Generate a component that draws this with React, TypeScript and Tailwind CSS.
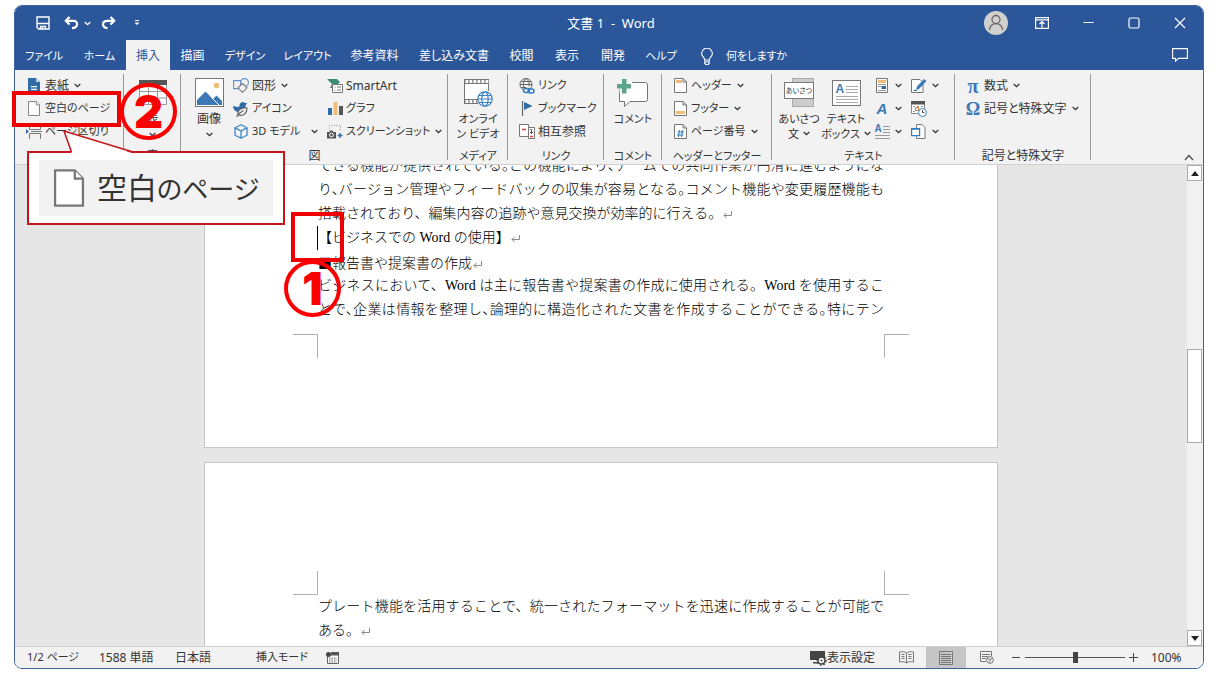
import { useState } from "react";
import type { ReactNode } from "react";
import clsx from "clsx";

const TABS = [
  { label: "ファイル", width: "w-[58px]" },
  { label: "ホーム", width: "w-[53px]" },
  { label: "挿入", width: "w-[44px]" },
  { label: "描画", width: "w-[45px]" },
  { label: "デザイン", width: "w-[60px]" },
  { label: "レイアウト", width: "w-[65px]" },
  { label: "参考資料", width: "w-[69px]" },
  { label: "差し込み文書", width: "w-[90px]" },
  { label: "校閲", width: "w-[45px]" },
  { label: "表示", width: "w-[46px]" },
  { label: "開発", width: "w-[46px]" },
  { label: "ヘルプ", width: "w-[50px]" },
];

// Labels that are mostly kana are set one size smaller than kanji ones
const labelSize = (label: string) =>
  /[ぁ-ヶー]{3,}/.test(label) ? "text-[11px]" : "text-xs";

export default function App() {
  return (
    <div className="relative h-screen overflow-hidden bg-white px-[14px] py-[5px] font-['Noto_Sans','Noto_Sans_CJK_JP',sans-serif] text-xs text-[#333] [font-feature-settings:'palt']">
      <div className="flex h-full flex-col overflow-hidden rounded-lg border border-[#3f659f] bg-[#f2f2f2]">
        <TitleBar />
        <TabBar />
        <Ribbon />
        <div className="flex min-h-0 flex-1 bg-[#e6e6e6]">
          <Document />
          <ScrollBar />
        </div>
        <StatusBar />
      </div>
      <Annotations />
    </div>
  );
}

function TitleBar() {
  return (
    <header className="flex h-[34px] shrink-0 items-center bg-[#2b579a] text-white">
      <div className="flex flex-1 items-center pl-[21px]">
        <button aria-label="上書き保存">
          <svg width="14" height="14" viewBox="0 0 14 14" fill="none" stroke="#fff" strokeWidth="1.4">
            <path d="M1 1h12v12H2.500L1 11.500z" />
            <path d="M1 7.500h12M4.500 13v-2.500h5V13M6.500 13v-1.500" />
          </svg>
        </button>
        <button aria-label="元に戻す" className="ml-[14px]">
          <svg width="15" height="14" viewBox="0 0 15 14" fill="none" stroke="#fff" strokeWidth="2.200">
            <path d="M5.500 1 1.800 4.800l3.700 3.700M2 4.800h7.500c5 0 5 7-1.500 7.400" />
          </svg>
        </button>
        <button aria-label="元に戻す一覧" className="ml-[5px]">
          <Chevron className="text-white" />
        </button>
        <button aria-label="やり直し" className="ml-[10px]">
          <svg width="15" height="14" viewBox="0 0 15 14" fill="none" stroke="#fff" strokeWidth="2.200">
            <path d="m9.500 1 3.700 3.800-3.700 3.700M13 4.800H6.500c-6 0-6 7 0 7.400" />
          </svg>
        </button>
        <button aria-label="クイック アクセス ツール バーのカスタマイズ" className="ml-[18px]">
          <svg width="6" height="6" viewBox="0 0 6 6" fill="#fff">
            <path d="M1 0h4v1H1zM0.500 2.500h5L3 5z" />
          </svg>
        </button>
      </div>
      <h1 className="whitespace-pre pt-0.5 text-[13px]">文書 1  -  Word</h1>
      <div className="flex flex-1 items-center justify-end pr-[17px]">
        <button aria-label="アカウント">
          <svg width="24" height="24" viewBox="0 0 24 24" fill="none">
            <circle cx="12" cy="12" r="12" fill="#d2d0ce" />
            <circle cx="12" cy="8.500" r="4" stroke="#666" strokeWidth="1.300" />
            <path d="M5.500 19c0-8.500 13-8.500 13 0" stroke="#666" strokeWidth="1.300" />
          </svg>
        </button>
        <button aria-label="リボンの表示オプション" className="ml-[27px]">
          <svg width="14" height="12" viewBox="0 0 14 12" fill="none" stroke="#fff" strokeWidth="1.200">
            <path d="M.6.6h12.800v10.800H.6zM.6 2.800h12.800M7 10.500V5M4.500 7 7 4.500 9.500 7" />
          </svg>
        </button>
        <button aria-label="最小化" className="ml-[34px]">
          <svg width="11" height="12" viewBox="0 0 11 12">
            <path d="M.5 5.500h10" stroke="#fff" />
          </svg>
        </button>
        <button aria-label="最大化" className="ml-[34px]">
          <svg width="12" height="12" viewBox="0 0 12 12" fill="none" stroke="#fff" strokeWidth="1.200">
            <rect x="1" y="1" width="10" height="10" rx="1.500" />
          </svg>
        </button>
        <button aria-label="閉じる" className="ml-[34px]">
          <svg width="12" height="12" viewBox="0 0 12 12" fill="none" stroke="#fff" strokeWidth="1.200">
            <path d="m1 1 10 10M11 1 1 11" />
          </svg>
        </button>
      </div>
    </header>
  );
}

function TabBar() {
  const [active, setActive] = useState("挿入");

  return (
    <nav className="flex h-[30px] shrink-0 items-stretch bg-[#2b579a] text-white">
      {TABS.map((tab) => (
        <button
          key={tab.label}
          onClick={() => setActive(tab.label)}
          className={clsx(
            "shrink-0 whitespace-nowrap pt-0.5 text-center",
            tab.width,
            labelSize(tab.label),
            tab.label === active && "bg-[#f2f2f2] text-[#2b579a]",
          )}
        >
          {tab.label}
        </button>
      ))}
      <button className="ml-[15px] flex items-center gap-[13px] pt-0.5 text-[11px]">
        <svg width="12" height="17" viewBox="0 0 12 17" fill="none" stroke="#fff" strokeWidth="1.100">
          <path d="M3.800 12c0-2.500-3.200-3.300-3.200-6.400a5.400 5.400 0 0 1 10.800 0c0 3.100-3.200 3.900-3.200 6.400zM3.800 12v3.500l1 1h2.400l1-1V12M3.800 14h4.400" />
        </svg>
        何をしますか
      </button>
      <button aria-label="コメント" className="ml-auto mr-[15px]">
        <svg width="16" height="14" viewBox="0 0 16 14" fill="none" stroke="#fff" strokeWidth="1.100">
          <path d="M.6.6h14.800v9.800H6.500l-3 2.800v-2.800H.6z" />
        </svg>
      </button>
    </nav>
  );
}

function Chevron({ className }: { className?: string }) {
  return (
    <svg
      width="7"
      height="5"
      viewBox="0 0 7 5"
      fill="none"
      stroke="currentColor"
      strokeWidth="1.300"
      className={clsx("shrink-0", className)}
    >
      <path d="m.7 1 2.800 2.700L6.300 1" />
    </svg>
  );
}

function Group({
  label,
  className,
  children,
}: {
  label: string;
  className: string;
  children: ReactNode;
}) {
  return (
    <section className={clsx("relative flex shrink-0 flex-col", className)}>
      <div className="flex h-[73px]">{children}</div>
      <div
        className={clsx(
          "h-[17px] whitespace-nowrap text-center leading-[17px]",
          labelSize(label),
        )}
      >
        {label}
      </div>
      <div className="absolute right-0 top-0 h-[86px] w-px bg-[#999]" />
    </section>
  );
}

function SmallButton({
  icon,
  label,
  menu,
  className,
}: {
  icon: ReactNode;
  label: string;
  menu?: boolean;
  className?: string;
}) {
  return (
    <button
      className={clsx("flex h-[23px] items-center gap-[3px] whitespace-nowrap", className)}
    >
      <span className="flex w-4 shrink-0 justify-center">{icon}</span>
      <span className={labelSize(label)}>{label}</span>
      {menu && <Chevron className="ml-[2px]" />}
    </button>
  );
}

function BigButton({
  icon,
  children,
  className,
}: {
  icon: ReactNode;
  children: ReactNode;
  className: string;
}) {
  return (
    <button
      className={clsx(
        "flex shrink-0 flex-col items-center whitespace-nowrap leading-[15px]",
        className,
      )}
    >
      <span className="flex h-[37px] items-center">{icon}</span>
      {children}
    </button>
  );
}

function IconMenuButton({ icon, label, menu = true }: { icon: ReactNode; label: string; menu?: boolean }) {
  return (
    <button aria-label={label} className="flex h-[23px] items-center gap-[5px]">
      <span className="flex w-4 justify-center">{icon}</span>
      {menu && <Chevron />}
    </button>
  );
}

function Ribbon() {
  return (
    <div className="flex h-[95px] shrink-0 border-b border-[#d0d0d0] bg-[#f2f2f2] pt-1">
      <Group label="ページ" className="w-[109px]">
        <div className="pl-[11px]">
          <SmallButton icon={<CoverIcon />} label="表紙" menu />
          <SmallButton icon={<PageIcon width={12} height={15} />} label="空白のページ" />
          <SmallButton icon={<BreakIcon />} label="ページ区切り" />
        </div>
      </Group>
      <Group label="表" className="w-[57px]">
        <BigButton icon={<TableIcon />} className="w-full">
          <span>表</span>
          <Chevron className="mt-[6px]" />
        </BigButton>
      </Group>
      <Group label="図" className="w-[267px]">
        <BigButton icon={<PictureIcon />} className="ml-2 w-10">
          <span>画像</span>
          <Chevron className="mt-[6px]" />
        </BigButton>
        <div className="ml-1 w-[94px]">
          <SmallButton icon={<ShapesIcon />} label="図形" menu />
          <SmallButton icon={<BirdIcon />} label="アイコン" />
          <div className="flex items-center justify-between pr-[9px]">
            <SmallButton icon={<CubeIcon />} label="3D モデル" />
            <Chevron />
          </div>
        </div>
        <div>
          <SmallButton icon={<SmartArtIcon />} label="SmartArt" />
          <SmallButton icon={<ChartIcon />} label="グラフ" />
          <SmallButton icon={<ScreenshotIcon />} label="スクリーンショット" menu />
        </div>
      </Group>
      <Group label="メディア" className="w-[60px]">
        <BigButton icon={<VideoIcon />} className="w-full text-[11px]">
          <span>オンライ</span>
          <span>ン ビデオ</span>
        </BigButton>
      </Group>
      <Group label="リンク" className="w-24">
        <div className="pl-[11px]">
          <SmallButton icon={<LinkIcon />} label="リンク" />
          <SmallButton icon={<FlagIcon />} label="ブックマーク" />
          <SmallButton icon={<CrossRefIcon />} label="相互参照" />
        </div>
      </Group>
      <Group label="コメント" className="w-[58px]">
        <BigButton icon={<CommentIcon />} className="w-full text-[11px]">
          <span>コメント</span>
        </BigButton>
      </Group>
      <Group label="ヘッダーとフッター" className="w-[110px]">
        <div className="pl-[10px]">
          <SmallButton icon={<HeaderIcon />} label="ヘッダー" menu />
          <SmallButton icon={<FooterIcon />} label="フッター" menu />
          <SmallButton icon={<PageNumberIcon />} label="ページ番号" menu />
        </div>
      </Group>
      <Group label="テキスト" className="w-[183px]">
        <BigButton icon={<GreetingIcon />} className="ml-1 w-[46px] text-[11px]">
          <span>あいさつ</span>
          <span className="flex items-center gap-1">
            文 <Chevron />
          </span>
        </BigButton>
        <BigButton icon={<TextBoxIcon />} className="w-[48px] text-[11px]">
          <span>テキスト</span>
          <span className="flex items-center gap-1">
            ボックス <Chevron />
          </span>
        </BigButton>
        <div className="ml-1">
          <IconMenuButton label="クイック パーツ" icon={<QuickPartsIcon />} />
          <IconMenuButton label="ワードアート" icon={<WordArtIcon />} />
          <IconMenuButton label="ドロップ キャップ" icon={<DropCapIcon />} />
        </div>
        <div className="ml-[9px]">
          <IconMenuButton label="署名欄" icon={<SignatureIcon />} />
          <IconMenuButton label="日付と時刻" icon={<DateIcon />} menu={false} />
          <IconMenuButton label="オブジェクト" icon={<ObjectIcon />} />
        </div>
      </Group>
      <Group label="記号と特殊文字" className="w-[136px]">
        <div className="pl-[10px]">
          <SmallButton
            icon={<span className="font-['Liberation_Serif',serif] text-xl font-bold leading-none text-[#3b78b5]">π</span>}
            label="数式"
            menu
          />
          <SmallButton
            icon={<span className="font-['Liberation_Serif',serif] text-lg font-bold leading-none text-[#3b78b5]">Ω</span>}
            label="記号と特殊文字"
            menu
          />
        </div>
      </Group>
      <div className="flex flex-1 items-end justify-end pb-[3px] pr-[9px]">
        <button aria-label="リボンを折りたたむ">
          <svg width="10" height="7" viewBox="0 0 10 7" fill="none" stroke="#444" strokeWidth="1.200">
            <path d="m1 6 4-4.500L9 6" />
          </svg>
        </button>
      </div>
    </div>
  );
}

function CoverIcon() {
  return (
    <svg width="12" height="15" viewBox="0 0 12 15">
      <path d="M0 0h8l4 4v11H0z" fill="#2f6ca8" />
      <path d="M8 0v4h4z" fill="#b8d0e8" />
      <path d="M3 8h6v1.200H3zM3 10.800h6V12H3z" fill="#fff" />
    </svg>
  );
}

function PageIcon({ width, height }: { width: number; height: number }) {
  return (
    <svg width={width} height={height} viewBox="0 0 12 15" fill="#fff" stroke="#777" strokeWidth=".9">
      <path d="M.5.5h7.800l3.200 3.300v10.700H.5z" />
      <path d="M8.300.5v3.300h3.200" />
    </svg>
  );
}

function BreakIcon() {
  return (
    <svg width="16" height="14" viewBox="0 0 16 14" fill="none" stroke="#777">
      <path d="M3.500 0v4.500h11V0M3.500 14V8.500h11V14M5 6.500h11" />
      <path d="M0 4v5l3-2.500z" fill="#2f6ca8" stroke="none" />
    </svg>
  );
}

function TableIcon() {
  return (
    <svg width="28" height="25" viewBox="0 0 28 25" fill="#fff" stroke="#999">
      <path d="M.5.5h27v24H.5zM.5 11.500h27M.5 18h27M9.500 5v19.500M18.500 5v19.500" />
      <path d="M0 0h28v5H0z" fill="#555" stroke="none" />
    </svg>
  );
}

function PictureIcon() {
  return (
    <svg width="29" height="29" viewBox="0 0 29 29">
      <rect x=".5" y=".5" width="28" height="28" fill="#fff" stroke="#777" />
      <circle cx="21.500" cy="7.500" r="2.800" fill="#efbd77" />
      <path d="M2 27v-5l8.500-8.500L18 21l3.500-3.500L27 23v4z" fill="#3b78b5" />
      <path d="m15.500 18.500 8.500 8.500" stroke="#fff" />
    </svg>
  );
}

function ShapesIcon() {
  return (
    <svg width="16" height="15" viewBox="0 0 16 15" fill="#f2f2f2" stroke="#5d93c9" strokeWidth="1.100">
      <circle cx="11.500" cy="4.500" r="3.900" />
      <path d="M.6 2.600h7v8h-7z" />
      <path d="m9.500 5.500 4.500 4.300-4.500 4.500L5 9.800z" stroke="#777" />
    </svg>
  );
}

function BirdIcon() {
  return (
    <svg width="16" height="16" viewBox="0 0 16 16">
      <path d="M0 4.500c2 1.500 4.500 1.800 6.500 1C6 1.500 10 0 12 2l2.500.5-2 1.500c.5 2-.5 4-2 5.500L5 11C2 10.500 0 8 0 4.500z" fill="#2f6ca8" />
      <path d="M5 14c-1-5 3-7.500 9-7 0 5.500-3 8.500-9 7zM3.500 15.800c2-3 4-4.800 7-6.300" fill="#f2f2f2" stroke="#666" strokeWidth="1.200" />
    </svg>
  );
}

function CubeIcon() {
  return (
    <svg width="14" height="15" viewBox="0 0 14 15" fill="none" stroke="#2f7cc0" strokeWidth="1.200">
      <path d="m7 .8 6 3v7.400l-6 3-6-3V3.800zM1 3.800l6 3.200 6-3.200M7 7v7" />
    </svg>
  );
}

function SmartArtIcon() {
  return (
    <svg width="16" height="14" viewBox="0 0 16 14">
      <path d="M0 0h10l3 3-2 2H8v4H3l2-4z" fill="#3f8c74" />
      <path d="M5.500 5.500h10v8h-10z" fill="#fff" stroke="#777" />
      <path d="M7.500 8h1M10 8h4M7.500 11h1M10 11h4" stroke="#777" />
    </svg>
  );
}

function ChartIcon() {
  return (
    <svg width="15" height="13" viewBox="0 0 15 13">
      <path d="M0 6h4v7H0z" fill="#2f6ca8" />
      <path d="M5.500 0h4v13h-4z" fill="#efbd77" />
      <path d="M11 4h4v9h-4z" fill="#555" />
    </svg>
  );
}

function ScreenshotIcon() {
  return (
    <svg width="16" height="14" viewBox="0 0 16 14">
      <path d="M2.500 6V.5h11v6" fill="none" stroke="#999" strokeDasharray="1 1.500" />
      <path d="M0 7h2.500l1-1.500h2l1 1.500H9v6.500H0z" fill="#555" />
      <circle cx="4.500" cy="10" r="1.900" fill="#555" stroke="#fff" />
      <path d="M13 8v5M10.500 10.500h5" stroke="#2f6ca8" strokeWidth="1.500" />
    </svg>
  );
}

function VideoIcon() {
  return (
    <svg width="30" height="30" viewBox="0 0 30 30">
      <path d="M1.500 1.500h24v24h-24z" fill="#fff" />
      <path d="M1 1h25v5H1zM1 21h14v5H1z" fill="#777" />
      <path d="M2.500 3.500h23M2.500 23.500H15" stroke="#fff" strokeWidth="2.800" strokeDasharray="2.800 1.200" />
      <path d="M1.500 6v15M25.500 6v7" stroke="#777" />
      <g fill="#fff" stroke="#3b82c4" strokeWidth="1.200">
        <circle cx="22" cy="21" r="7.200" />
        <ellipse cx="22" cy="21" rx="3.200" ry="7.200" />
        <path d="M15 21h14M16 17.500h12M16 24.500h12" fill="none" />
      </g>
    </svg>
  );
}

function LinkIcon() {
  return (
    <svg width="16" height="16" viewBox="0 0 16 16" fill="none" stroke="#666">
      <circle cx="7" cy="6.500" r="6" />
      <path d="M1 6.500h12M2 3.500h10M2 9.500h5M7 .5c-3.500 3-3.500 8 0 12M7 .5c3 2 3.500 5 3 8" />
      <g stroke="#2f7cc0" strokeWidth="1.500">
        <rect x="4.500" y="10.500" width="6" height="4" rx="2" fill="#f2f2f2" />
        <rect x="9" y="11" width="6" height="4" rx="2" />
      </g>
    </svg>
  );
}

function FlagIcon() {
  return (
    <svg width="12" height="15" viewBox="0 0 12 15">
      <path d="M1.500 0v15" stroke="#666" strokeWidth="1.200" />
      <path d="m3 1 8.500 4L3 9z" fill="#2f6ca8" />
    </svg>
  );
}

function CrossRefIcon() {
  return (
    <svg width="16" height="15" viewBox="0 0 16 15" fill="#fff" stroke="#777">
      <path d="M.5.5h9v12h-9z" />
      <path d="M9.500 3.500h6v11h-6z" />
      <path d="M3 5.500h4M11 12.500h3" stroke="#d64b3c" strokeWidth="1.400" />
      <path d="M11 5.500h1.500v4M11 8l1.500 1.500L14 8" fill="none" stroke="#555" />
    </svg>
  );
}

function CommentIcon() {
  return (
    <svg width="32" height="28" viewBox="0 0 32 28">
      <path d="M2.500 10V22.500H7.500V27.500L13 22.500H28.500Q30.500 22.500 30.500 20.500V6Q30.500 3.500 28.500 3.500H15" fill="#fff" stroke="#777" />
      <path d="M2.500 14V4h12" fill="#f2f2f2" stroke="none" />
      <path d="M5 0h4.500v5H14v4.500H9.500v5H5v-5H0V5h5z" fill="#5ba58e" />
    </svg>
  );
}

function HeaderIcon() {
  return (
    <svg width="13" height="15" viewBox="0 0 13 15" fill="#fff" stroke="#777">
      <path d="M.5.5h8.500L12.500 4v10.500H.5zM9 .5V4h3.500" />
      <path d="M2 2h6v3H2z" fill="#efbd77" stroke="none" />
    </svg>
  );
}

function FooterIcon() {
  return (
    <svg width="13" height="15" viewBox="0 0 13 15" fill="#fff" stroke="#777">
      <path d="M.5.5h8.500L12.500 4v10.500H.5zM9 .5V4h3.500" />
      <path d="M2 10h9v3H2z" fill="#efbd77" stroke="none" />
    </svg>
  );
}

function PageNumberIcon() {
  return (
    <svg width="13" height="15" viewBox="0 0 13 15" fill="#fff" stroke="#777">
      <path d="M.5.5h8.500L12.500 4v10.500H.5zM9 .5V4h3.500" />
      <path d="M5.500 6 4.500 13M8.500 6l-1 7M3.500 8h6.500M3 11h6.500" stroke="#2f7cc0" />
    </svg>
  );
}

function GreetingIcon() {
  return (
    <span className="relative block h-[29px] w-[30px]">
      <span className="absolute inset-y-0 left-2 right-0 border border-[#aaa] bg-[#ccc]" />
      <span className="absolute inset-x-0 top-1 flex h-[17px] items-center justify-center border border-[#777] bg-white text-[7px]">
        あいさつ
      </span>
    </span>
  );
}

function TextBoxIcon() {
  return (
    <span className="relative block h-[26px] w-[29px] border border-[#777] bg-white">
      <svg width="27" height="24" viewBox="0 0 27 24" stroke="#aaa">
        <path d="M13 5.500h12M13 8.500h12M13 11.500h12M3 15.500h22M3 18.500h22M3 21.500h22" />
      </svg>
      <span className="absolute left-[3px] top-px font-['Liberation_Sans',sans-serif] text-xs font-bold leading-[15px] text-[#3b78b5]">
        A
      </span>
    </span>
  );
}

function QuickPartsIcon() {
  return (
    <svg width="12" height="15" viewBox="0 0 12 15" fill="#fff" stroke="#777">
      <path d="M.5.5h11v14H.5z" />
      <path d="M2 2h8v3H2z" fill="#efbd77" stroke="none" />
      <path d="M2 6.500h8M2 8.500h3M2 12.500h8" stroke="#999" />
      <path d="M5.500 8H10v3H5.500z" fill="#2f6ca8" stroke="none" />
    </svg>
  );
}

function WordArtIcon() {
  return (
    <span className="font-['Liberation_Sans',sans-serif] text-[15px] font-bold italic leading-none text-[#3b78b5]">
      A
    </span>
  );
}

function DropCapIcon() {
  return (
    <span className="relative block h-[14px] w-[15px]">
      <svg width="15" height="14" viewBox="0 0 15 14" stroke="#999">
        <path d="M8 1.500h7M8 4.500h7M8 7.500h7M0 10.500h15M0 13.500h15" />
      </svg>
      <span className="absolute left-0 top-0 font-['Liberation_Sans',sans-serif] text-[10px] font-bold leading-[8px] text-[#3b78b5]">
        A
      </span>
    </span>
  );
}

function SignatureIcon() {
  return (
    <svg width="16" height="15" viewBox="0 0 16 15">
      <path d="M.5 1.500H9l3 3v10H.5z" fill="#fff" stroke="#777" />
      <path d="m5 12 1-3.500L13 1l2.500 2L8 11z" fill="#3b78b5" />
      <path d="M2.500 12.500H6" stroke="#2f6ca8" />
    </svg>
  );
}

function DateIcon() {
  return (
    <svg width="16" height="16" viewBox="0 0 16 16">
      <path d="M.5.5h13v12H.5z" fill="#fff" stroke="#888" />
      <path d="M0 0h14v3.500H0z" fill="#555" />
      <path d="M2 5.500h2M6 5.500h2M10 5.500h2M2 10.500h2" stroke="#999" />
      <path d="M4.500 6.500h3v3h-3z" fill="#fff" stroke="#e07b39" />
      <circle cx="11.500" cy="11.500" r="4" fill="#fff" stroke="#3b82c4" />
      <path d="M11.500 9v2.500h2" stroke="#555" fill="none" />
    </svg>
  );
}

function ObjectIcon() {
  return (
    <svg width="16" height="15" viewBox="0 0 16 15" fill="#fff">
      <path d="M5.500.5h5.500l3 3v11H5.500z" stroke="#777" />
      <path d="M.6 4.600h8v7h-8z" stroke="#2f7cc0" strokeWidth="1.200" />
      <path d="M0 4h9v1.800H0z" fill="#2f7cc0" />
    </svg>
  );
}

function ReturnMark() {
  return (
    <svg width="9" height="8" viewBox="0 0 9 8" fill="none" stroke="#888" className="ml-px inline-block">
      <path d="M8.500 0v4.500H1M3.500 2 1 4.500 3.500 7" />
    </svg>
  );
}

function Line({
  children,
  full,
  tight,
}: {
  children: ReactNode;
  full?: boolean;
  tight?: boolean;
}) {
  return (
    <p
      className={clsx(
        "h-6 whitespace-nowrap",
        full && "[text-align-last:justify]",
        tight && "[font-feature-settings:'halt']",
      )}
    >
      {children}
    </p>
  );
}

function CropMarks({ side }: { side: "top" | "bottom" }) {
  const edge = side === "bottom" ? "border-t" : "border-b";

  return (
    <div className="-mx-[25px] flex justify-between">
      <span className={clsx("h-6 w-[25px] border-r border-[#b0b0b0]", edge)} />
      <span className={clsx("h-6 w-[25px] border-l border-[#b0b0b0]", edge)} />
    </div>
  );
}

function Document() {
  return (
    <main className="flex min-w-0 flex-1 flex-col items-center overflow-hidden font-['Liberation_Serif','Noto_Sans_CJK_JP',serif] text-sm font-light leading-6 text-black [font-feature-settings:normal]">
      <article className="-mt-3 w-[794px] shrink-0 border border-[#c6c6c6] bg-white px-[113px] pb-[89px]">
        <Line full tight>できる機能が提供されている。この機能により、チームでの共同作業が円滑に進むようにな</Line>
        <Line full tight>り、バージョン管理やフィードバックの収集が容易となる。コメント機能や変更履歴機能も</Line>
        <Line>
          搭載されており、編集内容の追跡や意見交換が効率的に行える。
          <ReturnMark />
        </Line>
        <Line>
          【ビジネスでの Word の使用】
          <ReturnMark />
        </Line>
        <Line>
          <span className="font-['Noto_Sans_CJK_JP',sans-serif]">■</span>
          報告書や提案書の作成
          <ReturnMark />
        </Line>
        <Line full>ビジネスにおいて、Word は主に報告書や提案書の作成に使用される。Word を使用するこ</Line>
        <Line full tight>とで、企業は情報を整理し、論理的に構造化された文書を作成することができる。特にテン</Line>
        <div className="pt-3">
          <CropMarks side="bottom" />
        </div>
      </article>
      <article className="mt-[14px] w-[794px] shrink-0 border border-[#c6c6c6] bg-white px-[113px] pt-[108px] pb-24">
        <CropMarks side="top" />
        <Line full>プレート機能を活用することで、統一されたフォーマットを迅速に作成することが可能で</Line>
        <Line>
          ある。
          <ReturnMark />
        </Line>
      </article>
    </main>
  );
}

function ScrollBar() {
  return (
    <div className="flex w-4 shrink-0 flex-col bg-[#f2f2f2] pr-px">
      <button
        aria-label="上へスクロール"
        className="flex h-4 items-center justify-center border border-[#aaa] bg-white"
      >
        <svg width="8" height="5" viewBox="0 0 8 5">
          <path d="M0 5h8L4 0z" fill="#222" />
        </svg>
      </button>
      <div className="grow-[168]" />
      <div className="h-[94px] border border-[#aaa] bg-white" />
      <div className="grow-[188]" />
      <button
        aria-label="下へスクロール"
        className="flex h-4 items-center justify-center border border-[#aaa] bg-white"
      >
        <svg width="8" height="5" viewBox="0 0 8 5">
          <path d="M0 0h8L4 5z" fill="#222" />
        </svg>
      </button>
    </div>
  );
}

function StatusBar() {
  const [zoom, setZoom] = useState(100);

  return (
    <footer className="flex h-[22px] shrink-0 items-center whitespace-nowrap border-t border-[#d0d0d0] bg-[#f2f2f2] pl-3">
      <span className="w-[72px] text-[11px]">1/2 ページ</span>
      <span className="w-[76px]">1588 単語</span>
      <span className="w-[81px]">日本語</span>
      <span className="w-[70px] text-[11px]">挿入モード</span>
      <button aria-label="マクロの記録">
        <svg width="13" height="12" viewBox="0 0 13 12">
          <path d="M1.500 3v8.500h11V1.500H5" fill="#fff" stroke="#666" />
          <path d="M5 0h8v3.500H5z" fill="#555" />
          <circle cx="2.500" cy="2.500" r="2.500" fill="#444" />
          <path d="M3 6h8M3 8h8M3 10h8" stroke="#666" strokeDasharray="1.500 1" />
        </svg>
      </button>
      <div className="ml-auto flex items-center self-stretch">
        <button className="flex items-center">
          <svg width="17" height="16" viewBox="0 0 17 16">
            <path d="M0 1h15v9H0zM3 12h5v1.500H3z" fill="#444" />
            <circle cx="11.500" cy="10.500" r="3.500" fill="#f2f2f2" stroke="#444" strokeWidth="1.500" />
            <circle cx="11.500" cy="10.500" r="4.500" fill="none" stroke="#444" strokeWidth="1.500" strokeDasharray="1.700 1.700" />
            <circle cx="11.500" cy="10.500" r="1" fill="#444" />
          </svg>
          表示設定
        </button>
        <button aria-label="閲覧モード" className="ml-6">
          <svg width="15" height="13" viewBox="0 0 15 13" fill="none" stroke="#777">
            <path d="M7.500 2C6 .5 3 .5.500 1v10c2.500-.5 5.500-.5 7 1 1.500-1.500 4.500-1.500 7-1V1c-2.500-.5-5.500-.5-7 1zM7.500 2v10M2.500 3.500h3M2.500 5.500h3M2.500 7.500h3M9.500 3.500h3M9.500 5.500h3M9.500 7.500h3" />
          </svg>
        </button>
        <button
          aria-label="印刷レイアウト"
          className="ml-3 flex w-10 items-center justify-center self-stretch bg-[#c6c6c6]"
        >
          <svg width="14" height="14" viewBox="0 0 14 14" fill="none" stroke="#777">
            <path d="M.5.500h13v13H.5zM2 3.500h10M2 5.500h10M2 7.500h10M2 9.500h10M2 11.500h10" />
          </svg>
        </button>
        <button aria-label="Web レイアウト" className="ml-[14px]">
          <svg width="14" height="13" viewBox="0 0 14 13" fill="none" stroke="#777">
            <path d="M6 10.500H.5V.5h11V5M2 3.500h8M2 5.500h6M2 7.500h4" />
            <circle cx="10" cy="9" r="3.400" fill="#f2f2f2" />
            <path d="m7.500 7.500 3 1-1 3M10.500 8.500 12.500 7" />
          </svg>
        </button>
        <button aria-label="縮小" className="ml-[18px]" onClick={() => setZoom(Math.max(10, zoom - 10))}>
          <svg width="8" height="9" viewBox="0 0 8 9" stroke="#444">
            <path d="M0 4.500h8" />
          </svg>
        </button>
        <input
          type="range"
          aria-label="ズーム"
          min={10}
          max={190}
          value={zoom}
          onChange={(e) => setZoom(Number(e.target.value))}
          className="ml-[5px] h-3 w-[100px] appearance-none bg-transparent [&::-webkit-slider-runnable-track]:h-px [&::-webkit-slider-runnable-track]:bg-[#555] [&::-webkit-slider-thumb]:-mt-[5px] [&::-webkit-slider-thumb]:h-[11px] [&::-webkit-slider-thumb]:w-[5px] [&::-webkit-slider-thumb]:appearance-none [&::-webkit-slider-thumb]:bg-[#444]"
        />
        <button aria-label="拡大" className="ml-1" onClick={() => setZoom(Math.min(190, zoom + 10))}>
          <svg width="9" height="9" viewBox="0 0 9 9" stroke="#444">
            <path d="M0 4.500h9M4.500 0v9" />
          </svg>
        </button>
        <span className="ml-[13px] w-[52px]">{zoom}%</span>
      </div>
    </footer>
  );
}

function Badge({ children, className }: { children: ReactNode; className: string }) {
  return (
    <span
      className={clsx(
        "absolute flex size-[57px] items-center justify-center rounded-full border-4 border-[#fa0000] font-['Inter',sans-serif] text-[45px] font-black leading-none text-[#fa0000]",
        className,
      )}
    >
      {children}
    </span>
  );
}

// Step markers drawn over the window
function Annotations() {
  return (
    <div className="pointer-events-none absolute inset-0">
      <span className="absolute left-[317px] top-[226px] h-6 w-px bg-black" />
      <span className="absolute left-3 top-[91px] h-9 w-[109px] border-4 border-[#ee0000]" />
      <span className="absolute left-[291px] top-[212px] h-[50px] w-[53px] border-4 border-[#ee0000]" />
      <Badge className="left-[284px] top-[260px]">1</Badge>
      <Badge className="left-[120px] top-[83px]">2</Badge>
      <div className="absolute left-[27px] top-[151px] h-[74px] w-[258px] border-2 border-[#c5161d] bg-white px-[10px] py-[7px]">
        <svg width="112" height="24" viewBox="0 0 112 24" className="absolute left-[34px] top-[-23px]">
          <path d="M9 24 1 1l71 23z" fill="#fff" />
          <path d="M8.500 22 1 1l69 21" fill="none" stroke="#c5161d" strokeWidth="1.500" />
        </svg>
        <div className="flex h-full items-center gap-3 bg-[#f2f2f2] pl-[14px] leading-none text-[#333]">
          <PageIcon width={32} height={38} />
          <span className="whitespace-nowrap text-[30px]">
            空白<span className="text-[26px]">のページ</span>
          </span>
        </div>
      </div>
    </div>
  );
}
